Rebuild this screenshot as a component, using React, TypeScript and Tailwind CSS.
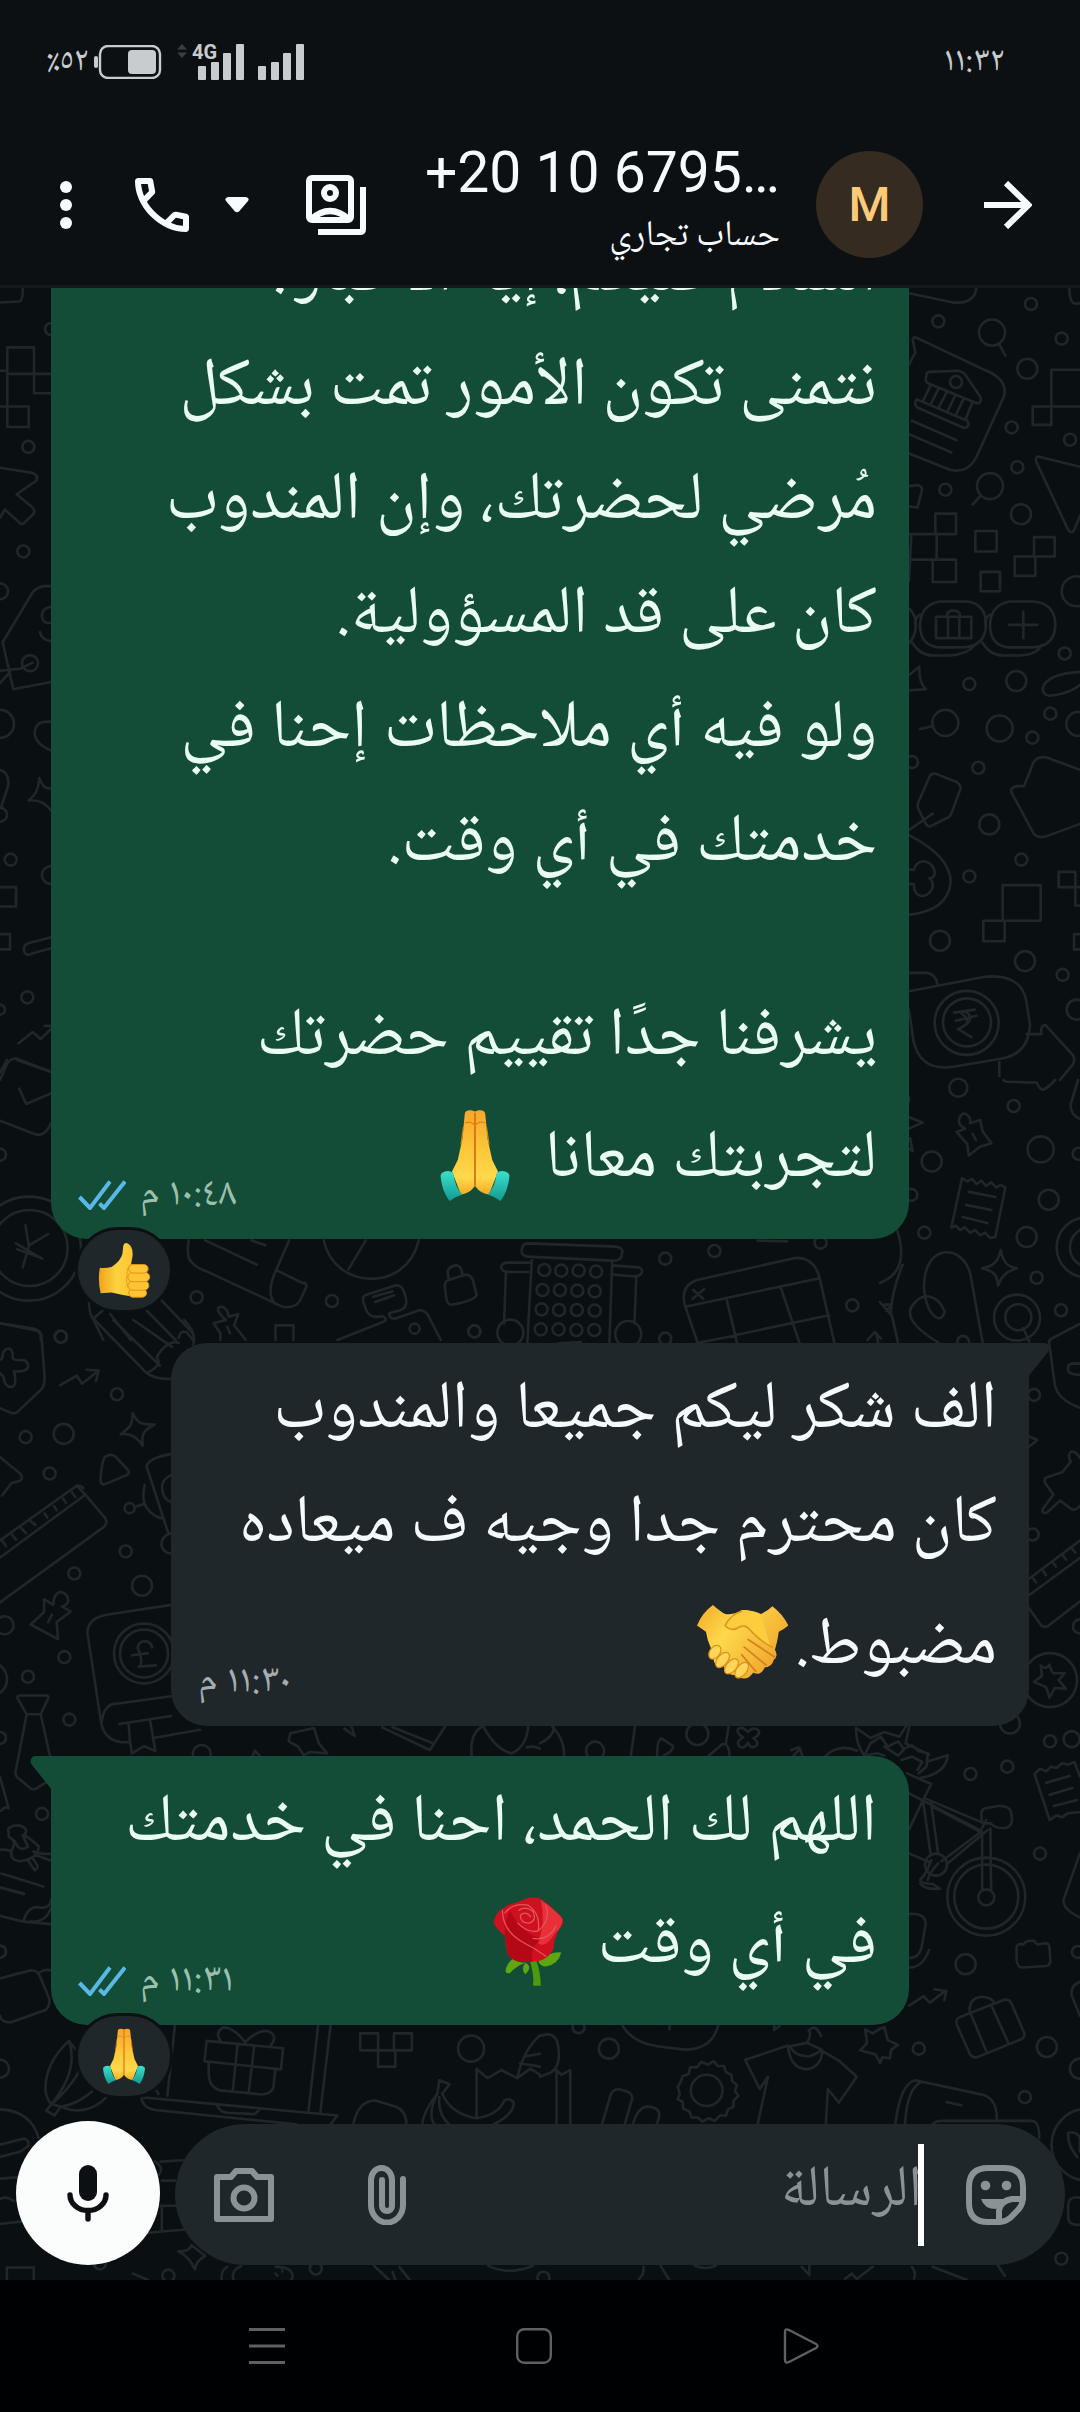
import { useState, type ReactNode } from "react";

type Dot = [x: number, y: number, r: number];

interface PatchProps {
  x: number;
  y: number;
  sx: number;
  sy: number;
  d: string;
  dots: Dot[];
}

// One area of the wallpaper: shapes are traced on their own grid, circles stay round
function Patch({ x, y, sx, sy, d, dots }: PatchProps) {
  return (
    <>
      <path
        d={d}
        transform={`translate(${x} ${y}) scale(${1 / sx} ${1 / sy})`}
        vectorEffect="non-scaling-stroke"
      />
      {dots.map(([cx, cy, r]) => (
        <circle key={`${cx}-${cy}`} cx={x + cx / sx} cy={y + cy / sy} r={r} />
      ))}
    </>
  );
}

const PATCHES: PatchProps[] = [
  {
    x: 0, y: 280, sx: 3, sy: 1.96,
    d: "M0 44L58 42Q70 40 68 14M22 132H102V184H22ZM0 178H22V288H86V248H0M102 184V222H153M153 184H102M0 368L98 378Q118 384 108 394L50 420L98 446Q108 454 98 460L76 474Q66 482 56 474L14 450L0 466M153 600H130Q112 602 98 612L8 710L40 802L153 788M0 766L60 762L98 750M0 790L30 768M153 640Q124 644 126 660Q128 674 153 672M120 690Q124 706 153 708M0 960Q30 966 24 992L4 1032M153 866Q104 862 104 890Q108 910 153 922M86 1020Q116 1006 118 976Q130 1000 153 996M86 1020Q130 1018 153 1040M0 1190H48V1228H0M0 1282H30V1312H0M153 1288L84 1300Q66 1306 74 1318Q82 1326 96 1320L153 1310M153 1148Q124 1152 126 1168Q130 1182 153 1184M56 1496L98 1474L122 1488L153 1468M134 1462H153M0 1568L20 1538Q30 1526 48 1526L153 1552",
    dots: [[85, 327, 6], [70, 532, 6], [0, 610, 8], [90, 751, 8], [0, 870, 14], [0, 1048, 7], [32, 1136, 6], [82, 1406, 6], [0, 1430, 5], [153, 96, 6]],
  },
  {
    x: 880, y: 280, sx: 3, sy: 1.96,
    d: "M87 26L220 44Q284 48 290 14M568 14Q568 44 584 46H600M87 166L106 142L98 116Q100 110 112 114L320 178Q384 196 372 228L290 346Q264 380 210 372L87 340M140 186Q138 180 150 180L232 178Q246 178 256 186L300 228Q308 240 292 242L142 202Q134 198 140 186ZM110 234L262 276Q272 288 252 290L112 250Q100 244 110 234ZM152 206L130 236M176 212L152 244M200 220L176 250M226 226L204 256M250 234L228 264M276 242L256 274M96 276L230 314M87 302L214 338M358 126L376 148M600 176H514V284H458V248H600M600 366L474 346Q464 348 470 358L562 486Q574 502 584 488L600 462M300 424L278 440M87 404L116 402Q128 406 126 412L112 446L87 444M166 458H228V498H166ZM87 498H170V548H87M87 590L94 498M158 548H228V592H158ZM286 492H350V532H286ZM302 572H360V610H302ZM462 504H524V542H462ZM404 542H466V580H404ZM180 630H260Q318 634 318 676Q316 718 250 720H180Q120 718 120 676Q122 636 180 630ZM390 630H460Q526 634 526 676Q524 718 460 720H390Q330 718 330 676Q332 636 390 630ZM87 644Q108 656 108 676Q106 700 87 712M120 656Q102 664 106 676M96 710Q120 736 160 736H210Q262 734 284 716M330 656Q312 664 316 676M306 710Q330 736 370 736H420Q472 734 484 716M168 660H274V702H168ZM204 660V702M238 660V702M200 660Q200 648 220 648Q242 648 240 660M430 650V702M388 676H472M87 774L118 758Q116 790 138 802L87 804M600 768Q500 772 488 800Q490 818 520 814Q570 810 600 794M160 874L120 880M148 974Q154 966 168 968L230 984Q246 990 240 1000L214 1046Q208 1054 196 1056L154 1070Q144 1074 136 1064L116 1038Q110 1030 116 1022ZM158 1046L87 1078M600 960L500 936Q474 932 460 946L432 992L410 992Q386 996 396 1006L460 1084Q474 1096 500 1090L600 1066M87 1088Q212 1130 212 1180Q204 1236 87 1244M87 1156H102C110 1130 164 1136 164 1164C162 1172 154 1172 148 1172C160 1178 160 1188 156 1194C140 1214 100 1212 102 1184L87 1184M368 1186H482V1256H368ZM310 1256H374V1296H310ZM536 1160H586V1190H536ZM586 1190H600M586 1190V1226H600M600 1282H582V1312H600M87 1358H140Q168 1360 172 1380M87 1394L310 1366Q420 1358 438 1410L450 1460Q446 1516 366 1526L220 1542Q120 1552 100 1490L87 1430M440 1478H484Q480 1462 496 1460L580 1520Q586 1530 578 1538L540 1568M358 1528V1560M222 1436L284 1430M228 1452L290 1442M242 1436Q284 1456 234 1468L274 1484M256 1434Q290 1448 246 1464",
    dots: [[453, 47, 6], [175, 81, 6], [336, 103, 13], [545, 115, 6], [442, 174, 10], [228, 200, 6], [395, 289, 6], [570, 313, 6], [412, 367, 6], [196, 411, 6], [330, 404, 13], [423, 459, 10], [590, 610, 15], [554, 732, 6], [268, 792, 6], [409, 786, 10], [196, 868, 13], [359, 879, 13], [511, 850, 6], [457, 897, 6], [595, 870, 12], [96, 945, 6], [295, 956, 6], [328, 1067, 10], [424, 1136, 6], [268, 1169, 6], [180, 1295, 10], [435, 1335, 10], [548, 1362, 6], [590, 1430, 10], [260, 1456, 32], [261, 1455, 24]],
  },
  {
    x: 880, y: 1080, sx: 3, sy: 2.306,
    d: "M370 0L378 4L470 6Q480 24 490 22Q500 20 526 0M594 0L572 56Q570 80 600 90M87 86L128 98L87 112M87 40V50M90 134L98 164L87 158M230 120L256 112Q232 104 238 88Q250 70 264 82Q274 90 270 100L300 92L308 118L334 146L300 154L266 174L262 148ZM278 124L288 138M246 226L262 234L276 228L290 240L304 232L318 244L334 236L348 248L362 242L376 248L346 362L330 364L316 352L300 358L286 346L270 352L254 340L240 346L228 336L214 340ZM266 258L346 270M258 288L334 300M248 316L322 330M52 348C78 410 60 450 0 468M68 426Q34 490 32 540M0 512L36 544L54 606M14 518H36M20 532L36 518M176 606C120 580 76 550 94 524C130 480 176 500 194 534C186 566 140 548 132 480C130 370 260 376 274 460L308 606M362 392C370 420 380 430 410 434C380 442 366 450 354 474C352 446 336 440 306 434C340 430 354 420 362 392ZM430 572L448 604M600 562L516 596Q504 600 508 610L524 700Q530 736 600 756M600 654H576Q562 656 564 668Q566 680 600 680M87 600M447 822L472 830L447 846M600 982Q584 996 572 988L540 970L500 998Q484 1000 488 990L520 956L496 930Q488 916 510 914L548 904L572 880Q560 862 576 856Q590 858 600 872M447 1150L600 1062M447 1188L600 1102M460 1150L468 1158M490 1132L498 1142M520 1114L528 1122M548 1096L558 1106M576 1080L586 1090M447 1218L480 1254Q490 1266 506 1258L600 1202M508 1348Q516 1366 520 1368H554Q546 1376 536 1384L558 1404Q534 1402 524 1402Q516 1414 508 1424Q502 1406 498 1400L462 1388Q480 1378 486 1374Q484 1360 482 1350Q498 1362 508 1348ZM232 606Q232 590 250 590Q266 592 268 606",
    dots: [[235, 18, 9], [401, 60, 6], [155, 188, 10], [482, 160, 13], [596, 170, 6], [94, 265, 6], [506, 276, 10], [440, 362, 10], [133, 352, 6], [470, 456, 6], [620, 386, 30], [630, 386, 20], [411, 548, 23], [415, 547, 13], [543, 531, 6], [462, 726, 6], [458, 1048, 6], [600, 1260, 7], [510, 1384, 27], [390, 1484, 10], [510, 1525, 6], [575, 1520, 8]],
  },
  {
    x: 0, y: 1320, sx: 3, sy: 2.45,
    d: "M0 8L112 26Q124 30 124 38L134 140Q134 160 124 170L54 224Q42 232 28 226L0 216M0 98Q8 96 8 84Q12 70 28 70Q40 74 38 94Q46 100 72 98Q86 104 84 116Q78 128 42 126Q52 160 36 164Q14 166 10 138L0 130M180 160L230 136L246 156L296 124M260 122L296 124L288 150M284 0L440 130Q470 146 513 144M340 0L480 112M400 0L516 66M440 130Q490 110 470 92C490 60 520 50 536 56M536 44Q540 24 560 30L580 50M552 0Q590 30 580 60M398 228C412 254 424 256 464 256C430 270 424 280 428 308C410 284 390 276 362 280C392 262 396 258 398 228ZM0 336L60 376Q72 386 60 394L34 400L6 430M314 336Q330 326 346 334L382 366Q392 374 380 380L316 402Q300 406 302 390Q304 352 314 336ZM0 582L256 428L230 406L0 540M256 428L316 486Q324 498 310 508L0 692M230 406Q242 404 250 412M216 422L226 434M190 438L198 448M162 456L170 466M134 474L142 484M90 492L106 502M64 510L78 522M36 526L48 538M8 542L18 554M440 360Q440 340 513 328M440 360L504 520M404 458L434 450M434 404Q424 440 440 460Q460 484 490 486M513 380Q486 390 486 410Q488 440 513 446M513 522Q484 530 484 550Q488 570 513 572M132 684L160 698Q160 672 180 666Q206 670 204 690Q200 700 186 702L212 714L170 740L174 782L92 746L132 716ZM156 722L144 740M513 698L320 722Q264 730 262 766L304 990Q320 1040 390 1034L396 1062L432 1044L466 1056L450 980M304 990Q310 940 350 940L513 922M358 990L513 970M386 990L390 1034M460 1024L600 1004M52 926Q52 920 60 920H138Q148 920 144 928L122 966H80ZM80 966L46 1110Q46 1116 54 1122L92 1148Q104 1154 116 1144L140 1132M122 966L150 1068M0 1120L26 1196Q14 1190 4 1202M26 1254C16 1240 60 1230 78 1248Q80 1256 72 1262Q92 1270 116 1290Q116 1320 60 1326Q20 1322 40 1290C46 1280 40 1272 26 1266ZM44 1276Q58 1306 84 1290L68 1262M82 1322L104 1348Q116 1344 112 1336L96 1316M0 1298Q20 1296 34 1302M100 1302Q130 1310 153 1308M104 1310L153 1324M4 1356L130 1388M0 1390L70 1406M0 1460L70 1474L153 1480M70 1474Q80 1440 110 1438Q150 1446 153 1420M90 1474Q140 1476 153 1440",
    dots: [[183, 41, 6], [351, 182, 6], [77, 287, 6], [191, 279, 10], [149, 376, 6], [389, 461, 5], [377, 567, 6], [223, 621, 6], [426, 651, 10], [14, 748, 9], [193, 826, 6], [84, 874, 6], [-30, 880, 17], [208, 979, 6], [432, 817, 30], [432, 817, 24], [0, 1024, 6], [126, 1210, 6], [0, 1547, 6]],
  },
  // pound sign on the book
  { x: 0, y: 1560, sx: 2.904, sy: 3, d: "M442 262Q436 240 414 244Q396 252 402 270Q414 290 408 318M384 286L430 280M402 320L452 316M843 520L912 504L926 550L950 580L900 576L882 586L866 560L838 544ZM1020 497L1030 528L1000 506M1110 502L1248 570L1294 497M1140 502L1254 548M1370 587Q1362 520 1404 497M1404 500Q1440 570 1486 580Q1530 560 1534 497M734 587L740 572L754 587M1530 562Q1550 556 1568 566", dots: [[586, 582, 9]] },
  {
    x: 0, y: 1060, sx: 2.904, sy: 3,
    d: "M0 38L20 0M50 0L148 36M0 182L100 222Q130 234 148 190M56 86L76 132L148 100M74 496L84 560L66 622M84 556L140 522M46 550L122 596M50 568L110 590M548 541Q540 590 556 606Q570 624 600 634L820 740Q860 746 872 720L890 680Q890 668 876 668L802 630M840 541L802 630Q770 700 800 732M596 541L746 614M730 541L770 556M940 541C970 690 1180 700 1216 541M1062 541L1012 628M1304 656Q1290 620 1326 616Q1344 622 1342 648M1292 680Q1290 660 1310 658L1350 644Q1370 644 1374 664L1384 704Q1380 722 1310 734Q1300 734 1296 716ZM620 790L656 780Q620 746 640 740Q660 740 664 770L692 762L680 796L714 840M620 790L640 820V840M660 800L668 820M1060 740Q1046 710 1064 704L1150 676Q1168 674 1176 704Q1188 740 1164 750L1130 760Q1130 776 1146 776L1220 750Q1240 752 1250 780L1280 840M1060 740Q1070 780 1110 768Q1130 780 1112 786L980 840M1084 710L1140 694M1090 726L1144 706M800 840V796H852V840M258 730Q262 770 270 776L300 840M270 776L300 750M320 762L380 840M426 752L510 840M470 722L560 820M0 790L100 806Q122 814 118 840",
    dots: [[0, 284, 6], [86, 564, 38], [84, 566, 52], [571, 712, 6], [964, 723, 6], [176, 830, 6], [1378, 814, 6], [1204, 806, 5]],
  },
  {
    x: 380, y: 1080, sx: 2.24, sy: 3,
    d: "M330 490L530 500Q546 504 542 520Q542 544 520 542L330 530Q314 526 318 506Q320 490 330 490ZM336 548H284Q270 550 272 564Q274 576 290 576H332M520 556L580 562Q590 568 586 580Q580 592 560 588L524 584M282 578L278 730M574 592L570 730M340 540L330 790M520 546L514 790M684 680Q670 620 710 600L930 534Q970 530 984 590L1018 790M684 680L980 596M684 680L712 790M776 656L800 790M898 624L940 790M800 764L1006 706M712 788L800 766M702 630L724 656M726 628L700 656M1092 780L1108 756L1122 776M1112 760L1116 790M400 790L450 786M846 482L912 484",
    dots: [[368, 570, 6], [406, 572, 6], [445, 572, 6], [484, 575, 6], [364, 630, 6], [403, 630, 6], [442, 632, 6], [481, 634, 6], [362, 688, 6], [401, 690, 6], [441, 690, 6], [481, 692, 6], [360, 748, 6], [400, 748, 6], [440, 750, 6], [480, 750, 6], [292, 758, 13], [556, 762, 13], [639, 536, 6], [749, 513, 6], [211, 754, 6], [639, 776, 6], [1058, 676, 6], [987, 488, 6]],
  },
  {
    x: 540, y: 1560, sx: 2.904, sy: 3,
    d: "M36 500Q72 540 70 587M0 550Q40 530 40 500M276 497L264 587M340 587Q340 536 354 536L386 558Q390 570 360 587M604 516Q624 496 636 514Q638 526 620 534Q640 550 624 560Q610 566 604 548Q594 568 580 560Q566 544 590 532Q568 520 576 506Q590 498 604 516ZM548 497L540 550M490 587L530 552Q550 550 550 587M730 570L752 562L762 587M756 566L736 587M830 587Q870 550 920 572M918 504Q916 550 942 587L960 550M918 504L960 534L1000 516L1044 530L1062 500M1072 500L1062 550L1130 584M1128 604L1184 586Q1180 640 1104 654M960 550L990 530L1010 560L1040 544L1056 566L1080 556L1100 574L1126 580L1122 620L1100 640M940 587L980 580L1000 587M1000 560L1040 587L1056 570M1050 600L1080 590L1110 606L1096 630M1066 640L1136 672L1112 720M1072 700L1280 812L1296 780M1120 716L1290 790M1112 720L1134 880M1136 730L1156 880M1140 740L1280 816L1166 904M1300 810L1186 908M1112 720L1072 808M1072 880L1130 906M1284 816V990M1308 806L1310 990M1286 790Q1272 744 1300 744Q1350 730 1366 750Q1380 800 1350 804Q1320 806 1310 790L1286 790M1156 910Q1130 940 1126 960M1136 900Q1124 940 1104 960Q1104 970 1140 972L1160 986M1436 642L1452 626L1470 634L1484 620L1500 624L1516 610L1534 614L1552 606L1568 650M1436 642L1480 780L1500 766L1516 772L1532 760L1568 756M1470 668L1538 648M1480 704L1546 684M1492 738L1560 720M1568 880L1520 1020Q1520 1050 1568 1072",
    dots: [[160, 572, 9], [457, 522, 11], [1150, 914, 11], [1296, 1010, 39], [1296, 1010, 32], [1296, 1012, 8], [1250, 642, 6], [1357, 620, 6], [1452, 881, 6]],
  },
  {
    x: 0, y: 1880, sx: 2.904, sy: 2.947,
    d: "M0 22L70 40M0 290L90 266Q110 266 116 284L144 352Q144 376 130 384L30 420Q4 420 0 400M110 276Q130 260 148 266M0 200M200 474Q130 540 132 620Q136 650 150 660L176 668M200 474Q230 560 150 660Q220 600 250 520M176 668Q240 660 300 590M150 660L134 680L158 694L176 668Q250 700 310 640M220 500L200 474M486 636L508 427M454 620L460 630M410 640L980 694L960 720M410 640Q414 672 450 678L860 720M630 664Q640 684 660 686L740 690L756 674M924 427L896 680M960 427L930 688M600 474L822 496L816 558L594 534ZM606 540V570Q606 610 640 620L760 632Q790 630 794 610L800 556M690 484L676 620M738 492L722 628M712 478Q680 436 650 434Q620 450 644 478M712 478Q750 440 780 446Q810 460 784 490M1046 452H1098V502H1046ZM1144 452H1196V502H1144ZM1098 502H1148V550H1098ZM1384 700V556L1416 584L1456 560L1502 584L1540 556L1568 574M1502 584Q1520 500 1568 458M1524 520L1568 512M1510 540L1568 550M1026 720Q1040 650 1090 650L1150 668Q1180 680 1180 720M1226 720Q1230 680 1270 630L1276 590L1306 602L1284 630Q1310 690 1384 702Q1450 690 1464 650Q1480 640 1492 656Q1494 690 1430 722M1270 630Q1240 690 1262 722M1276 640Q1270 690 1306 722M0 676Q90 680 112 760M0 780L70 762Q86 768 82 784L60 800L0 816M466 830L530 826M470 886L508 886M450 830Q480 850 460 870M0 880L50 876M0 940Q20 930 40 946M0 1014L66 1006M466 960H520M470 960V1036L540 1030M430 1040L470 1036M20 1179V1142H98V1179M386 1160L430 1179M518 1094Q550 1096 556 1076L596 1108Q570 1120 566 1148Q550 1110 518 1094M644 1179Q640 1150 660 1140M678 1179Q670 1150 700 1138M800 1140Q850 1140 850 1170L846 1179M800 1160L806 1166M820 1150V1154M1086 1137L1130 1179M1160 1140L1190 1179M1140 1155L1148 1179M1418 1137Q1480 1166 1548 1137",
    dots: [[0, 212, 6], [1368, 497, 13], [0, 556, 9], [290, 1130, 6], [489, 1166, 6], [917, 1145, 6]],
  },
  {
    x: 540, y: 1880, sx: 2.904, sy: 2.947,
    d: "M1072 100Q1120 96 1120 130L1108 200Q1100 230 1072 230M1072 258Q1110 260 1130 206M1104 10Q1120 30 1160 26M1072 370L1114 342L1132 362L1178 326M1146 322L1180 328L1174 354M1384 200Q1384 186 1404 190Q1410 176 1436 180L1444 190L1470 186Q1480 188 1480 206L1482 240Q1480 256 1460 254L1400 258Q1386 256 1384 236ZM1212 430Q1204 410 1220 404L1350 352Q1366 352 1370 366L1406 450Q1410 464 1396 470L1270 522Q1254 526 1248 512ZM1248 390Q1244 350 1280 344Q1316 346 1320 364M1252 396L1298 510M1310 368L1362 484M1568 300Q1540 310 1544 340L1568 400M240 430Q270 480 340 490L420 500Q500 500 518 427M376 430V440M680 427V442L696 430M0 460Q50 440 54 500Q60 560 20 572L0 580M48 560V720M48 560L62 574L88 560V720M180 720L206 630Q220 610 240 620Q274 626 266 650L246 720M270 720Q284 670 310 668Q350 670 346 696L340 720M596 530L720 488Q726 556 776 558Q816 550 820 504L870 534L920 580L868 656L836 616L830 720M596 530L638 616L662 580L632 720M726 490Q740 520 780 520Q810 510 818 500M726 490L776 480L818 500M776 480Q790 450 780 444Q800 420 816 460M984 440L1000 434L1010 472L1040 486L1020 500L1016 526L994 522L988 540L974 514L930 502L950 480L944 440L966 452ZM1032 720Q1046 600 1090 590L1290 634Q1330 650 1326 710M1060 720Q1066 610 1110 594M1180 654L1224 664M1140 720Q1150 708 1170 710H1430Q1450 712 1450 760M1534 745Q1560 740 1568 760L1568 800M1534 745Q1530 780 1560 816M1568 936Q1534 930 1534 960V1000Q1540 1018 1568 1016M300 1140Q304 1160 288 1175M350 1137L376 1179M450 1137Q480 1150 510 1137M760 1140L782 1164V1137M886 1175L906 1160L920 1176L966 1140M1080 1140Q1094 1160 1086 1175M1140 1140L1240 1179M1330 1137L1350 1166M438 620A45 45 0 1 0 530 620A45 45 0 1 0 438 620M400 610L408 596L414 578L432 572L436 552L456 552L468 536L488 544L504 534L516 548L534 548L540 566L556 574L558 592L572 604L566 622L576 636L562 650L562 668L546 676L540 694L522 694L508 710L490 702L472 712L458 700L440 700L434 682L416 674L414 654L400 646L406 630Z",
    dots: [[1236, 248, 10], [1562, 212, 6], [200, 497, 10], [112, 434, 6], [1100, 497, 6], [1472, 492, 10], [1568, 556, 10], [1408, 640, 6], [1590, 780, 36], [1514, 1116, 6], [10, 1172, 6]],
  },
];

function Wallpaper() {
  return (
    <svg
      aria-hidden="true"
      className="absolute inset-0 h-full w-full"
      viewBox="0 288 1080 1992"
      preserveAspectRatio="xMidYMid slice"
      fill="none"
      stroke="#20272a"
      strokeWidth="2.6"
      strokeLinejoin="round"
      strokeLinecap="round"
    >
      {PATCHES.map((p, i) => (
        <Patch key={i} {...p} />
      ))}
    </svg>
  );
}

function PrayEmoji({ className }: { className: string }) {
  return (
    <svg role="img" aria-label="🙏" viewBox="0 0 72 72" className={className}>
      <defs>
        <linearGradient id="prayHand" x1="0" y1="0" x2="0" y2="1">
          <stop offset="0" stopColor="#f9a62b" />
          <stop offset="0.5" stopColor="#fdc93a" />
          <stop offset="0.8" stopColor="#fed94c" />
          <stop offset="1" stopColor="#f7ab24" />
        </linearGradient>
        <linearGradient id="prayCuff" x1="0" y1="0" x2="0" y2="1">
          <stop offset="0" stopColor="#3ce0cd" />
          <stop offset="1" stopColor="#139a90" />
        </linearGradient>
      </defs>
      <path d="M36 2C32 0 28 1 28 4L26 24L22.500 40L18 49L25 67C31 66 34 63 36 60C38 63 41 66 47 67L54 49L49.500 40L46 24L44 4C44 1 40 0 36 2Z" fill="url(#prayHand)" />
      <path d="M36 3V60" stroke="#d97a12" strokeWidth="1.600" />
      <path d="M28 11Q33 9 36 13Q39 9 44 11M27 14L25 28M45 14L47 28" fill="none" stroke="#de8415" strokeWidth="0.900" />
      <path d="M10 50Q15 47 19 50Q20 60 26 67Q20 69 16 72Q10 64 9 52Z" fill="url(#prayCuff)" />
      <path d="M62 50Q57 47 53 50Q52 60 46 67Q52 69 56 72Q62 64 63 52Z" fill="url(#prayCuff)" />
    </svg>
  );
}

function ThumbEmoji({ className }: { className: string }) {
  return (
    <svg role="img" aria-label="👍" viewBox="0 0 72 72" className={className}>
      <defs>
        <linearGradient id="thumbHand" x1="0" y1="0" x2="1" y2="0">
          <stop offset="0" stopColor="#f0a21a" />
          <stop offset="0.4" stopColor="#fdd23f" />
          <stop offset="1" stopColor="#fbbd2d" />
        </linearGradient>
      </defs>
      <path d="M5 33Q12 34 20 32Q32 24 34 15L35 5Q36 0 41 2Q48 6 47 18L45 29H60V68L46 70Q32 68 20 65L6 66Q2 50 5 33Z" fill="url(#thumbHand)" />
      <g fill="#fdc535" stroke="#e28f13" strokeWidth="1.200">
        <rect x="42" y="60" width="23" height="11" rx="5.500" />
        <rect x="41" y="50" width="27" height="12" rx="6" />
        <rect x="41" y="39" width="28" height="12" rx="6" />
        <rect x="42" y="29" width="25" height="11" rx="5.500" />
      </g>
      <path d="M45 29Q39 33 40 42Q38 50 41 58" fill="none" stroke="#e79a1a" strokeWidth="1.200" />
    </svg>
  );
}

function HandshakeEmoji({ className }: { className: string }) {
  return (
    <svg role="img" aria-label="🤝" viewBox="0 0 72 72" className={className}>
      <defs>
        <linearGradient id="shakeHand" x1="0" y1="0" x2="1" y2="0.600">
          <stop offset="0" stopColor="#f4aa22" />
          <stop offset="0.400" stopColor="#fed84c" />
          <stop offset="1" stopColor="#f0a52b" />
        </linearGradient>
      </defs>
      <path d="M12.500 7Q18 12 22 14Q30 15 35 11Q44 11 50 14Q55 12 59 8Q67 14 71.500 23Q68 26 64 28Q63 36 61 42Q64 47 60 50Q59 55 53 56Q50 63 44 60Q38 68 31 62Q22 62 21 55Q13 56 13 49Q8 46 11 41Q8 35 7 28L0 23Q4 13 12.500 7Z" fill="url(#shakeHand)" />
      <path d="M22 23Q27 14 36 11Q46 12 50 15L57 38Q50 36 40 25Q36 22 32 25Q26 28 22 23Z" fill="#fdcd3e" />
      <path d="M35 12Q27 14 22 23Q26 28 32 25Q36 22 40 25Q50 36 59 40" fill="none" stroke="#dd9218" strokeWidth="1.200" strokeLinecap="round" />
      <g fill="#fed65a" stroke="#e0921c" strokeWidth="1">
        <ellipse cx="14" cy="44" rx="4" ry="6" transform="rotate(35 14 44)" />
        <ellipse cx="20" cy="50" rx="4" ry="7" transform="rotate(40 20 50)" />
        <ellipse cx="27" cy="55" rx="4" ry="7" transform="rotate(40 27 55)" />
        <ellipse cx="35" cy="58" rx="4" ry="7" transform="rotate(38 35 58)" />
      </g>
      <path d="M40 34L61 48M37 40L54 54M35 46L46 59" stroke="#d08420" strokeWidth="1.400" strokeLinecap="round" />
    </svg>
  );
}

function RoseEmoji({ className }: { className: string }) {
  return (
    <svg role="img" aria-label="🌹" viewBox="0 0 72 72" className={className}>
      <path d="M37 50Q41 62 40 71H46Q46 60 42 50Z" fill="#4d9a0c" />
      <path d="M24 50Q28 53 34 53Q26 56 22 61Q17 62 19 57Q20 53 24 50ZM34 53Q40 56 34 62Q30 58 34 53ZM44 52Q54 44 62 45Q60 54 50 56Q46 56 44 52Z" fill="#5da811" />
      <path d="M20 8Q28 6 34 3Q44 0 50 6Q55 9 57 13Q65 17 63 23Q56 32 56 42Q51 52 40 52Q24 54 20 46Q18 38 18 32Q10 26 9 21Q11 13 16 11Z" fill="#cf1020" />
      <path d="M46 4Q58 12 63 19Q63 25 57 30Q50 42 44 38Q50 20 46 4Z" fill="#e8303a" />
      <path d="M18 32Q17 22 22 12Q30 30 46 34Q36 44 40 52Q24 54 20 46Z" fill="#b50816" />
      <path d="M16 12Q16 28 32 37Q42 42 50 48M18 14Q24 6 36 8Q46 14 44 28Q36 30 28 22M29 12Q34 8 40 13Q43 20 37 22Q30 22 30 16Q34 12 38 17M44 28Q54 20 50 8M40 34Q52 36 58 24" fill="none" stroke="#e4555c" strokeWidth="1" strokeLinecap="round" />
    </svg>
  );
}

function Ticks() {
  return (
    <svg role="img" aria-label="تمت القراءة" viewBox="0 0 48 30" className="h-[30px] w-12" fill="none" stroke="#58b8e6" strokeWidth="4">
      <path d="M1.500 17L12 28L32 1.500" />
      <path d="M21.500 23.500L26 28L47 1.500" />
    </svg>
  );
}

function Line({ children }: { children: ReactNode }) {
  return <span className="block min-h-20 leading-[114px]">{children}</span>;
}

function EmojiLine({ text, emoji, tight }: { text: string; emoji: ReactNode; tight?: boolean }) {
  return (
    <span className={`flex h-[129px] items-center ${tight ? "gap-1.5" : "gap-6"}`}>
      <span className="leading-[114px]">{text}</span>
      {emoji}
    </span>
  );
}

interface BubbleProps {
  sent?: boolean;
  tail?: boolean;
  time: string;
  reaction?: ReactNode;
  children: ReactNode;
}

function Bubble({ sent, tail, time, reaction, children }: BubbleProps) {
  const side = sent ? "ml-[51px] mr-[171px]" : "ml-[171px] mr-[51px]";
  const color = sent ? "bg-[#144d37] text-[#e9fdf2]" : "bg-[#1f272a] text-[#f5fafc]";
  const corner = !tail ? "" : sent ? "rounded-tl-none" : "rounded-tr-none";

  return (
    <article className={side}>
      <div className={`relative rounded-[36px] pt-2.5 pr-8 pb-4 pl-8 ${color} ${corner}`}>
        <p className="text-[68px] whitespace-nowrap">{children}</p>
        <div className="absolute bottom-[23px] left-[27px] flex items-center gap-3.5">
          <time className={`text-[40px] leading-[42px] ${sent ? "text-[#9cc0ae]" : "text-[#a5adb1]"}`}>{time}</time>
          {sent && <Ticks />}
        </div>
        {tail && sent && (
          <svg aria-hidden="true" viewBox="0 0 22 34" className="absolute top-0 -left-[21px] h-[34px] w-[22px]" fill="#144d37">
            <path d="M22 0H6C1 0 -1 5 2 9L22 34Z" />
          </svg>
        )}
        {tail && !sent && (
          <svg aria-hidden="true" viewBox="0 0 22 34" className="absolute top-0 -right-[21px] h-[34px] w-[22px]" fill="#1f272a">
            <path d="M0 0H16C21 0 23 5 20 9L0 34Z" />
          </svg>
        )}
      </div>
      {reaction && (
        <button
          type="button"
          className="relative -mt-3 mr-auto ml-6 flex h-[86px] w-[98px] items-center justify-center rounded-full border-3 border-[#0c1013] bg-[#1f272a]"
        >
          {reaction}
        </button>
      )}
    </article>
  );
}

function Signal() {
  return (
    <svg aria-hidden="true" viewBox="0 0 46 36" className="h-9 w-[46px]" fill="#c9cccf">
      <rect y="22" width="8" height="14" rx="1" />
      <rect x="13" y="18" width="8" height="18" rx="1" />
      <rect x="25" y="9" width="8" height="27" rx="1" />
      <rect x="38" width="8" height="36" rx="1" />
    </svg>
  );
}

function StatusBar() {
  return (
    <div className="flex h-[124px] items-center justify-between pr-[76px] pl-[46px] text-[#c9cccf]">
      <time className="text-[35px] leading-10">١١:٣٢</time>
      <div className="flex items-center" dir="ltr">
        <span className="w-[42px] text-[35px] leading-10 whitespace-nowrap" dir="rtl">٥٢٪</span>
        <svg role="img" aria-label="البطارية" viewBox="0 0 68 34" className="ml-1.5 h-[34px] w-[68px]" fill="#c9cccf">
          <rect y="11" width="4" height="12" rx="2" />
          <rect x="6" y="1" width="60" height="32" rx="8" fill="none" stroke="#c9cccf" strokeWidth="2.400" />
          <rect x="34" y="5" width="28" height="24" rx="4" />
        </svg>
        <div className="relative ml-9">
          <Signal />
          <svg aria-hidden="true" viewBox="0 0 10 14" className="absolute top-0 -left-[21px] h-3.5 w-2.5" fill="#3a3e41">
            <path d="M0 5.500L5 0L10 5.500ZM0 8.500L5 14L10 8.500Z" />
          </svg>
          <span className="absolute -top-1 -left-1.5 font-[Roboto] text-[20px] leading-6 font-bold">4G</span>
        </div>
        <div className="ml-3.5">
          <Signal />
        </div>
      </div>
    </div>
  );
}

function Header() {
  return (
    <header className="flex h-[164px] items-center border-b-3 border-[#14191c] pr-12 pl-[60px] text-[#f7fbfe]">
      <button type="button" aria-label="رجوع">
        <svg viewBox="0 0 48 48" className="size-12" fill="none" stroke="currentColor" strokeWidth="6">
          <path d="M0 24H44M22 2L44.500 24L22 46" />
        </svg>
      </button>
      <div className="mr-[61px] flex size-[107px] items-center justify-center rounded-full bg-[#352b20] font-[Roboto] text-[48px] font-medium text-[#fecb79]">
        M
      </div>
      <div className="mr-9 flex flex-1 flex-col items-start pb-2">
        <h1 className="font-[Roboto] text-[57px] leading-[72px] whitespace-nowrap" dir="ltr">+20 10 6795…</h1>
        <p className="text-[36px] leading-[56px]">حساب تجاري</p>
      </div>
      <button type="button" aria-label="جهة الاتصال">
        <svg viewBox="0 0 60 60" className="size-15" fill="none" stroke="currentColor" strokeWidth="6">
          <rect x="3" y="3" width="42" height="42" rx="3" />
          <circle cx="24" cy="18" r="6" />
          <path d="M4 45Q24 27 44 45M12 57H54Q57 57 57 54V12" />
        </svg>
      </button>
      <button type="button" aria-label="خيارات الاتصال" className="mr-[57px]">
        <svg viewBox="0 0 24 16" className="h-4 w-6" fill="currentColor">
          <path d="M3 0H21Q25 1 23 4L14 14.500Q12 16 10 14.500L1 4Q-1 1 3 0Z" />
        </svg>
      </button>
      <button type="button" aria-label="اتصال" className="mr-9">
        <svg viewBox="3 3 18 18" className="size-[54px]" fill="currentColor">
          <path d="M19.950 21q-3.125 0-6.175-1.362t-5.550-3.863-3.862-5.550T3 4.050q0-.45.300-.75t.750-.300H8.100q.350 0 .625.238t.325.562l.650 3.500q.050.400-.025.675T9.400 8.450L6.975 10.900q.500.925 1.187 1.787t1.513 1.663q.775.775 1.625 1.438T13.100 17l2.350-2.350q.225-.225.588-.337t.712-.063l3.450.700q.350.100.575.363T21 15.900v4.050q0 .450-.300.750t-.750.300M6.025 9l1.650-1.650L7.250 5H5.025q.125 1.025.350 2.025T6.025 9m8.950 8.950q.975.425 1.988.675T19 18.950v-2.200l-2.350-.475z" />
        </svg>
      </button>
      <button type="button" aria-label="المزيد" className="mr-[63px]">
        <svg viewBox="0 0 12 48" className="h-12 w-3" fill="currentColor">
          <circle cx="6" cy="6" r="6" />
          <circle cx="6" cy="24" r="6" />
          <circle cx="6" cy="42" r="6" />
        </svg>
      </button>
    </header>
  );
}

function Composer() {
  const [draft, setDraft] = useState("");

  return (
    <form className="relative mt-[22px] flex items-end gap-[15px] pr-[15px] pb-[15px] pl-4" onSubmit={(e) => e.preventDefault()}>
      <div className="flex h-[141px] flex-1 items-center rounded-full bg-[#1f272a] px-[39px] text-[#8b9296]">
        <button type="button" aria-label="ملصقات">
          <svg viewBox="0 0 60 60" className="size-15" fill="none" stroke="currentColor" strokeWidth="6">
            <path d="M22 3H38Q57 3 57 22V34Q56 42 50 47L44 53Q39 57 34 57H22Q3 57 3 38V22Q3 3 22 3Z" />
            <path d="M56 34H46Q34 36 33 46V56" />
            <circle cx="19.500" cy="20.500" r="4.800" fill="currentColor" stroke="none" />
            <circle cx="40.500" cy="20.500" r="4.800" fill="currentColor" stroke="none" />
            <path d="M15 34H38L30 44Q18 44 15 34Z" fill="currentColor" stroke="none" />
          </svg>
        </button>
        <label className="relative mr-[42px] flex h-[102px] flex-1 items-center">
          <input
            type="text"
            aria-label="الرسالة"
            placeholder="الرسالة"
            value={draft}
            onChange={(e) => setDraft(e.target.value)}
            className="h-full w-full min-w-0 bg-transparent pr-0.5 pb-2 text-[58px] outline-none placeholder:text-[#8b9296]"
          />
          {!draft && <span className="absolute inset-y-0 right-0 w-1.5 bg-white" />}
        </label>
        <button type="button" aria-label="إرفاق">
          <svg viewBox="0 0 60 60" className="size-15" fill="none" stroke="currentColor" strokeWidth="6" strokeLinecap="round">
            <path d="M46 14V40A15.500 17 0 0 1 14 40V15A10.500 12 0 0 1 35 15V41A5 5 0 0 1 25 41V15" />
          </svg>
        </button>
        <button type="button" aria-label="الكاميرا" className="mr-[83px]">
          <svg viewBox="0 0 60 60" className="size-15" fill="none" stroke="currentColor" strokeWidth="6" strokeLinejoin="round">
            <path d="M3 12H17L22 6H38L43 12H57V54H3Z" />
            <circle cx="30" cy="33" r="10.500" />
          </svg>
        </button>
      </div>
      <button type="button" aria-label="تسجيل صوتي" className="flex size-36 items-center justify-center rounded-full bg-[#fbfcfc] text-[#0c1013]">
        <svg viewBox="0 0 42 57" className="h-[57px] w-[42px]" fill="none" stroke="currentColor" strokeWidth="5.400" strokeLinecap="round">
          <rect x="12" y="0" width="18" height="36" rx="9" fill="currentColor" stroke="none" />
          <path d="M3 30A18 15.500 0 0 0 39 30M21 46V54" />
        </svg>
      </button>
    </form>
  );
}

function NavBar() {
  return (
    <nav className="grid h-[132px] grid-cols-3 items-center justify-items-center bg-[#000102] pr-[146px] pl-[133px] text-[#5f6062]" dir="ltr">
      <button type="button" aria-label="التطبيقات الأخيرة">
        <svg viewBox="0 0 36 36" className="size-9" stroke="currentColor" strokeWidth="3">
          <path d="M0 1.500H36M0 18H36M0 34.500H36" />
        </svg>
      </button>
      <button type="button" aria-label="الشاشة الرئيسية">
        <svg viewBox="0 0 36 36" className="size-9" fill="none" stroke="currentColor" strokeWidth="2.400">
          <rect x="1.200" y="1.200" width="33.600" height="33.600" rx="7" />
        </svg>
      </button>
      <button type="button" aria-label="العودة">
        <svg viewBox="0 0 36 36" className="size-9" fill="none" stroke="currentColor" strokeWidth="2.400">
          <path d="M2 4Q2 0 6 2L33 16Q36 18 33 20L6 34Q2 36 2 32Z" />
        </svg>
      </button>
    </nav>
  );
}

export default function App() {
  return (
    <div
      dir="rtl"
      lang="ar"
      className="flex h-screen flex-col overflow-hidden bg-[#0c1013] font-['Noto_Naskh_Arabic_UI','Noto_Naskh_Arabic','Noto_Sans_Arabic','DejaVu_Sans',sans-serif]"
    >
      <StatusBar />
      <Header />
      <main className="relative flex min-h-0 flex-1 flex-col justify-end overflow-hidden bg-[#0a0f12]">
        <Wallpaper />
        <section className="relative flex flex-col gap-[30px]">
          <Bubble sent time="١٠:٤٨ م" reaction={<ThumbEmoji className="size-14" />}>
            <Line>السلام عليكم، إيه الأخبار؟</Line>
            <Line>نتمنى تكون الأمور تمت بشكل</Line>
            <Line>مُرضي لحضرتك، وإن المندوب</Line>
            <Line>كان على قد المسؤولية.</Line>
            <Line>ولو فيه أي ملاحظات إحنا في</Line>
            <Line>خدمتك في أي وقت.</Line>
            <Line>{null}</Line>
            <Line>يشرفنا جدًا تقييم حضرتك</Line>
            <EmojiLine text="لتجربتك معانا" emoji={<PrayEmoji className="mb-2 size-[92px]" />} />
          </Bubble>
          <Bubble tail time="١١:٣٠ م">
            <Line>الف شكر ليكم جميعا والمندوب</Line>
            <Line>كان محترم جدا وجيه ف ميعاده</Line>
            <EmojiLine tight text="مضبوط." emoji={<HandshakeEmoji className="mb-2 size-[92px]" />} />
          </Bubble>
          <Bubble sent tail time="١١:٣١ م" reaction={<PrayEmoji className="size-14" />}>
            <Line>اللهم لك الحمد، احنا في خدمتك</Line>
            <EmojiLine text="في أي وقت" emoji={<RoseEmoji className="mb-2 size-[92px]" />} />
          </Bubble>
        </section>
        <Composer />
      </main>
      <NavBar />
    </div>
  );
}
